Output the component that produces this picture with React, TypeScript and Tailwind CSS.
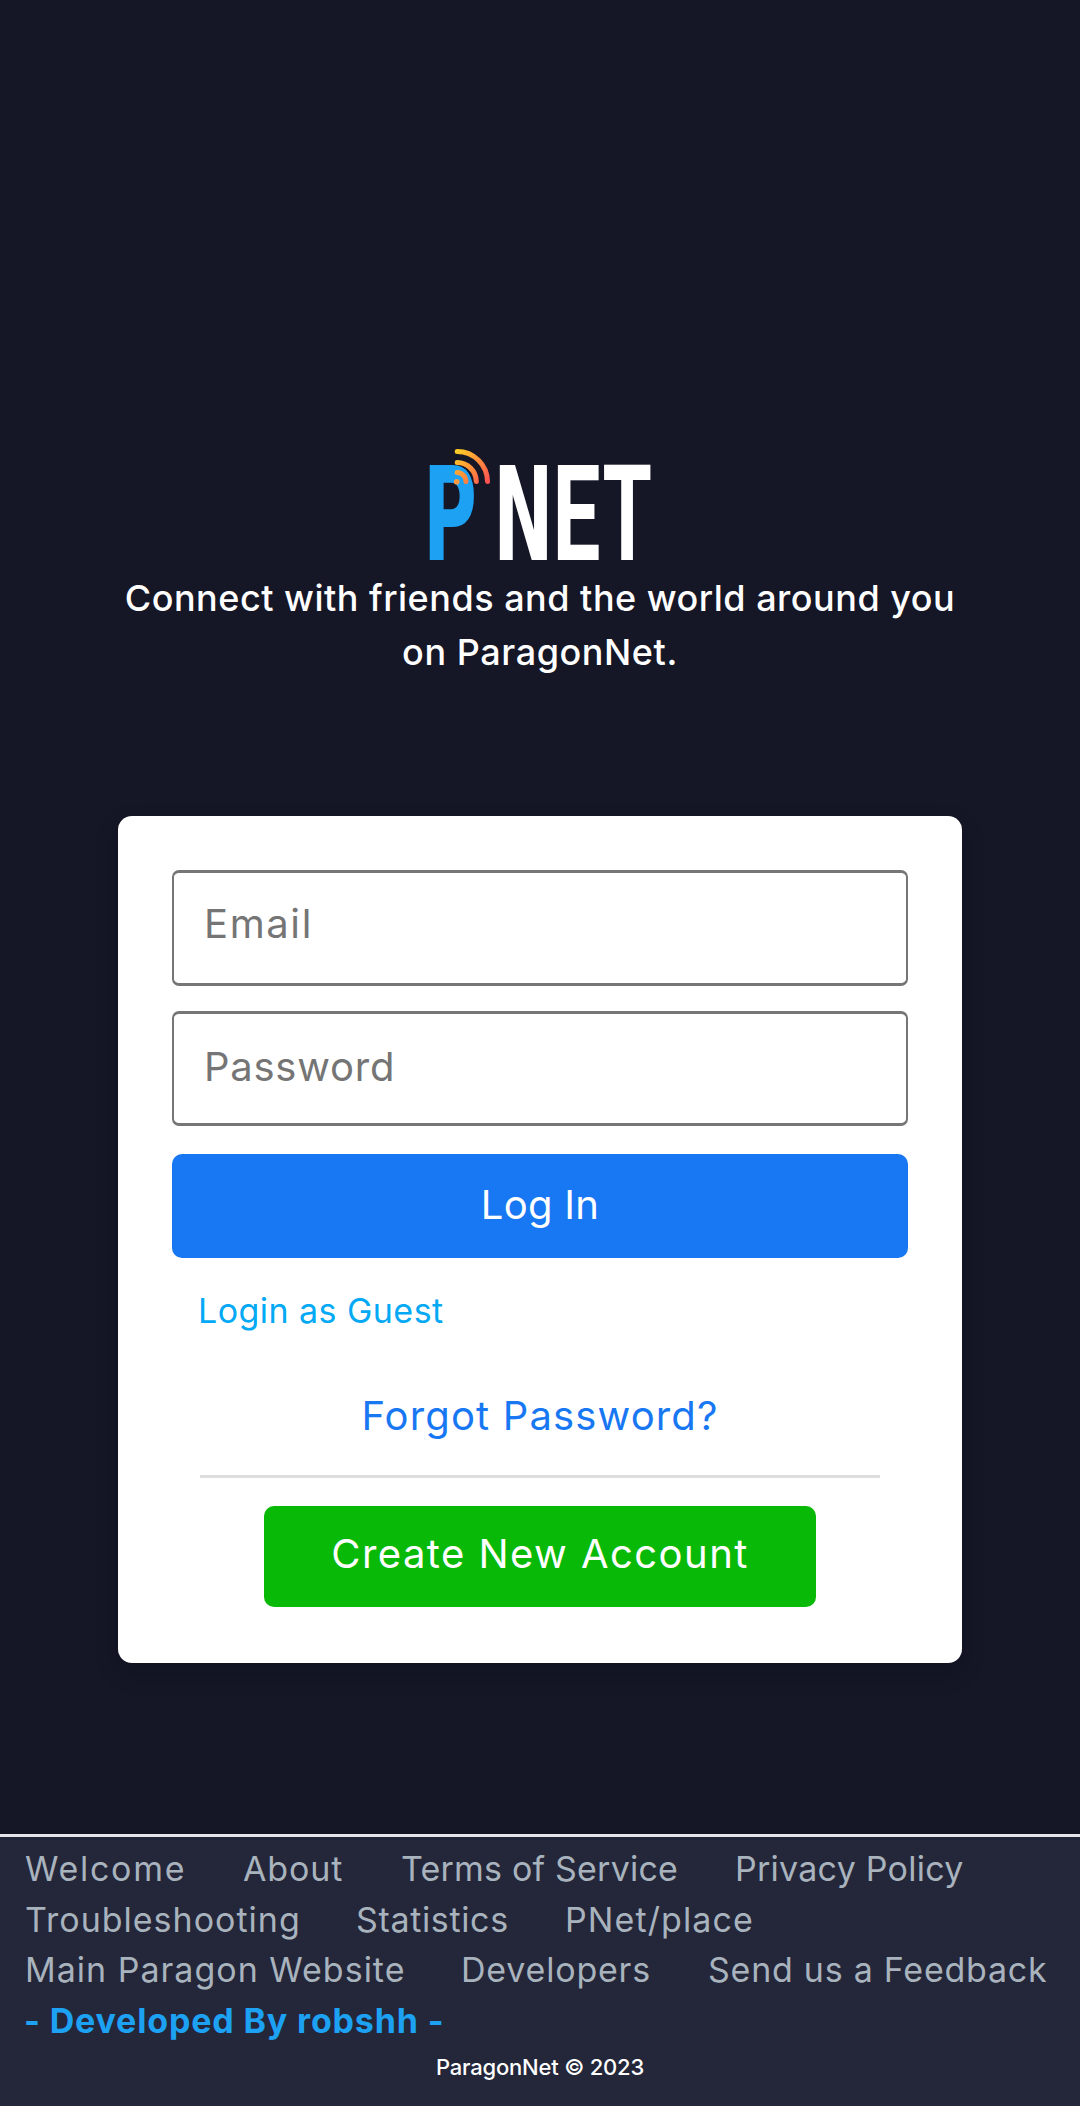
import React from "react";

type FooterLink = { label: string; className: string };

const footerRows: FooterLink[][] = [
  [
    { label: "Welcome", className: "w-[218px] tracking-[1.7px]" },
    { label: "About", className: "w-[158px] tracking-[0.9px]" },
    { label: "Terms of Service", className: "w-[334px] tracking-[0.2px]" },
    { label: "Privacy Policy", className: "tracking-[0.26px]" },
  ],
  [
    { label: "Troubleshooting", className: "w-[331px] tracking-[1px]" },
    { label: "Statistics", className: "w-[209px] tracking-[0.65px]" },
    { label: "PNet/place", className: "tracking-[1.1px]" },
  ],
  [
    { label: "Main Paragon Website", className: "w-[436px] tracking-[1px]" },
    { label: "Developers", className: "w-[247px] tracking-[0.8px]" },
    { label: "Send us a Feedback", className: "tracking-[0.75px]" },
  ],
];

function Logo() {
  return (
    <svg width="240" height="170" viewBox="420 425 240 170" className="-mb-6" role="img" aria-label="PNET">
      <defs>
        <linearGradient id="signal" gradientUnits="userSpaceOnUse" x1="457" y1="452" x2="489" y2="481">
          <stop offset="0" stopColor="#ffcb26" />
          <stop offset="1" stopColor="#ff5252" />
        </linearGradient>
      </defs>
      <g className="font-['DejaVu_Sans_Condensed',sans-serif] font-bold" fontSize="130">
        <text transform="translate(422.9 560) scale(0.629 1)" fill="#1da1f2">P</text>
        <text transform="translate(493.3 560) scale(0.615 1)" fill="#ffffff">N</text>
      </g>
      <g className="font-['Roboto',sans-serif] font-bold" fontSize="132.9" fill="#ffffff">
        <text transform="translate(552.4 560) scale(0.642 1)">E</text>
        <text transform="translate(602.5 560) scale(0.6 1)">T</text>
      </g>
      <g fill="none" stroke="url(#signal)" strokeWidth="5" strokeLinecap="round">
        <path d="M457.2 451.5A30.3 30.3 0 0 1 487.5 481.5" />
        <path d="M457.2 462.5A19.3 19.3 0 0 1 476.3 481.5" />
        <path d="M457.2 472.5A9 9 0 0 1 466 481.5" />
      </g>
      <circle cx="456.7" cy="481.8" r="2.8" fill="#ff9a3c" />
    </svg>
  );
}

export default function App() {
  return (
    <div className="flex h-[2106px] w-[1080px] flex-col bg-[#151626] font-['Inter',sans-serif] whitespace-nowrap">
      <header className="flex flex-col items-center pt-[425px] text-[36px] leading-[54px] font-medium text-white">
        <Logo />
        <p className="tracking-[0.5px]">Connect with friends and the world around you</p>
        <p className="tracking-[0.57px]">on ParagonNet.</p>
      </header>

      <form className="mx-auto mt-[137px] flex h-[847px] w-[844px] flex-col rounded-[14px] bg-white px-[54px] pt-[54px] text-[40px] shadow-[0_10px_25px_rgba(0,0,0,0.15)]">
        <input
          type="email"
          placeholder="Email"
          className="h-[116px] w-full rounded-[7px] border-x-2 border-y-3 border-[#767676] pb-[10px] pl-[30px] tracking-[1.6px] placeholder:text-[#757575]"
        />
        <input
          type="password"
          placeholder="Password"
          className="mt-[25px] h-[115px] w-full rounded-[7px] border-x-2 border-y-3 border-[#767676] pb-[5px] pl-[30px] tracking-[0.75px] placeholder:text-[#757575]"
        />
        <button type="button" className="mt-7 h-[104px] w-full rounded-[10px] bg-[#1877f2] pb-[3px] tracking-[0.3px] text-white">
          Log In
        </button>
        <a className="mt-7 pl-[26px] text-[34px] leading-[50px] tracking-[0.45px] text-[#03a9f4]">Login as Guest</a>
        <a className="mt-[50px] text-center leading-[60px] tracking-[1.15px] text-[#1877f2]">Forgot Password?</a>
        <hr className="mx-7 mt-[29px] h-[3px] border-0 bg-[#dddddd]" />
        <button type="button" className="mx-auto mt-7 h-[101px] w-[552px] rounded-[10px] bg-[#08b908] pb-[6px] tracking-[1.45px] text-white">
          Create New Account
        </button>
      </form>

      <footer className="mt-auto h-[272px] border-t-3 border-[#e4e6eb] bg-[#24263a] pt-[7px] text-[34px] leading-[50.5px] text-[#a8b3bd]">
        {footerRows.map((row) => (
          <nav key={row[0].label} className="flex pl-[25px]">
            {row.map((link) => (
              <a key={link.label} className={link.className}>{link.label}</a>
            ))}
          </nav>
        ))}
        <p className="pl-6 font-bold tracking-[0.84px] text-[#1da1f2]">- Developed By robshh -</p>
        <p className="mt-[5px] text-center text-[22px] leading-8 font-medium tracking-[-0.2px] text-white">ParagonNet © 2023</p>
      </footer>
    </div>
  );
}
